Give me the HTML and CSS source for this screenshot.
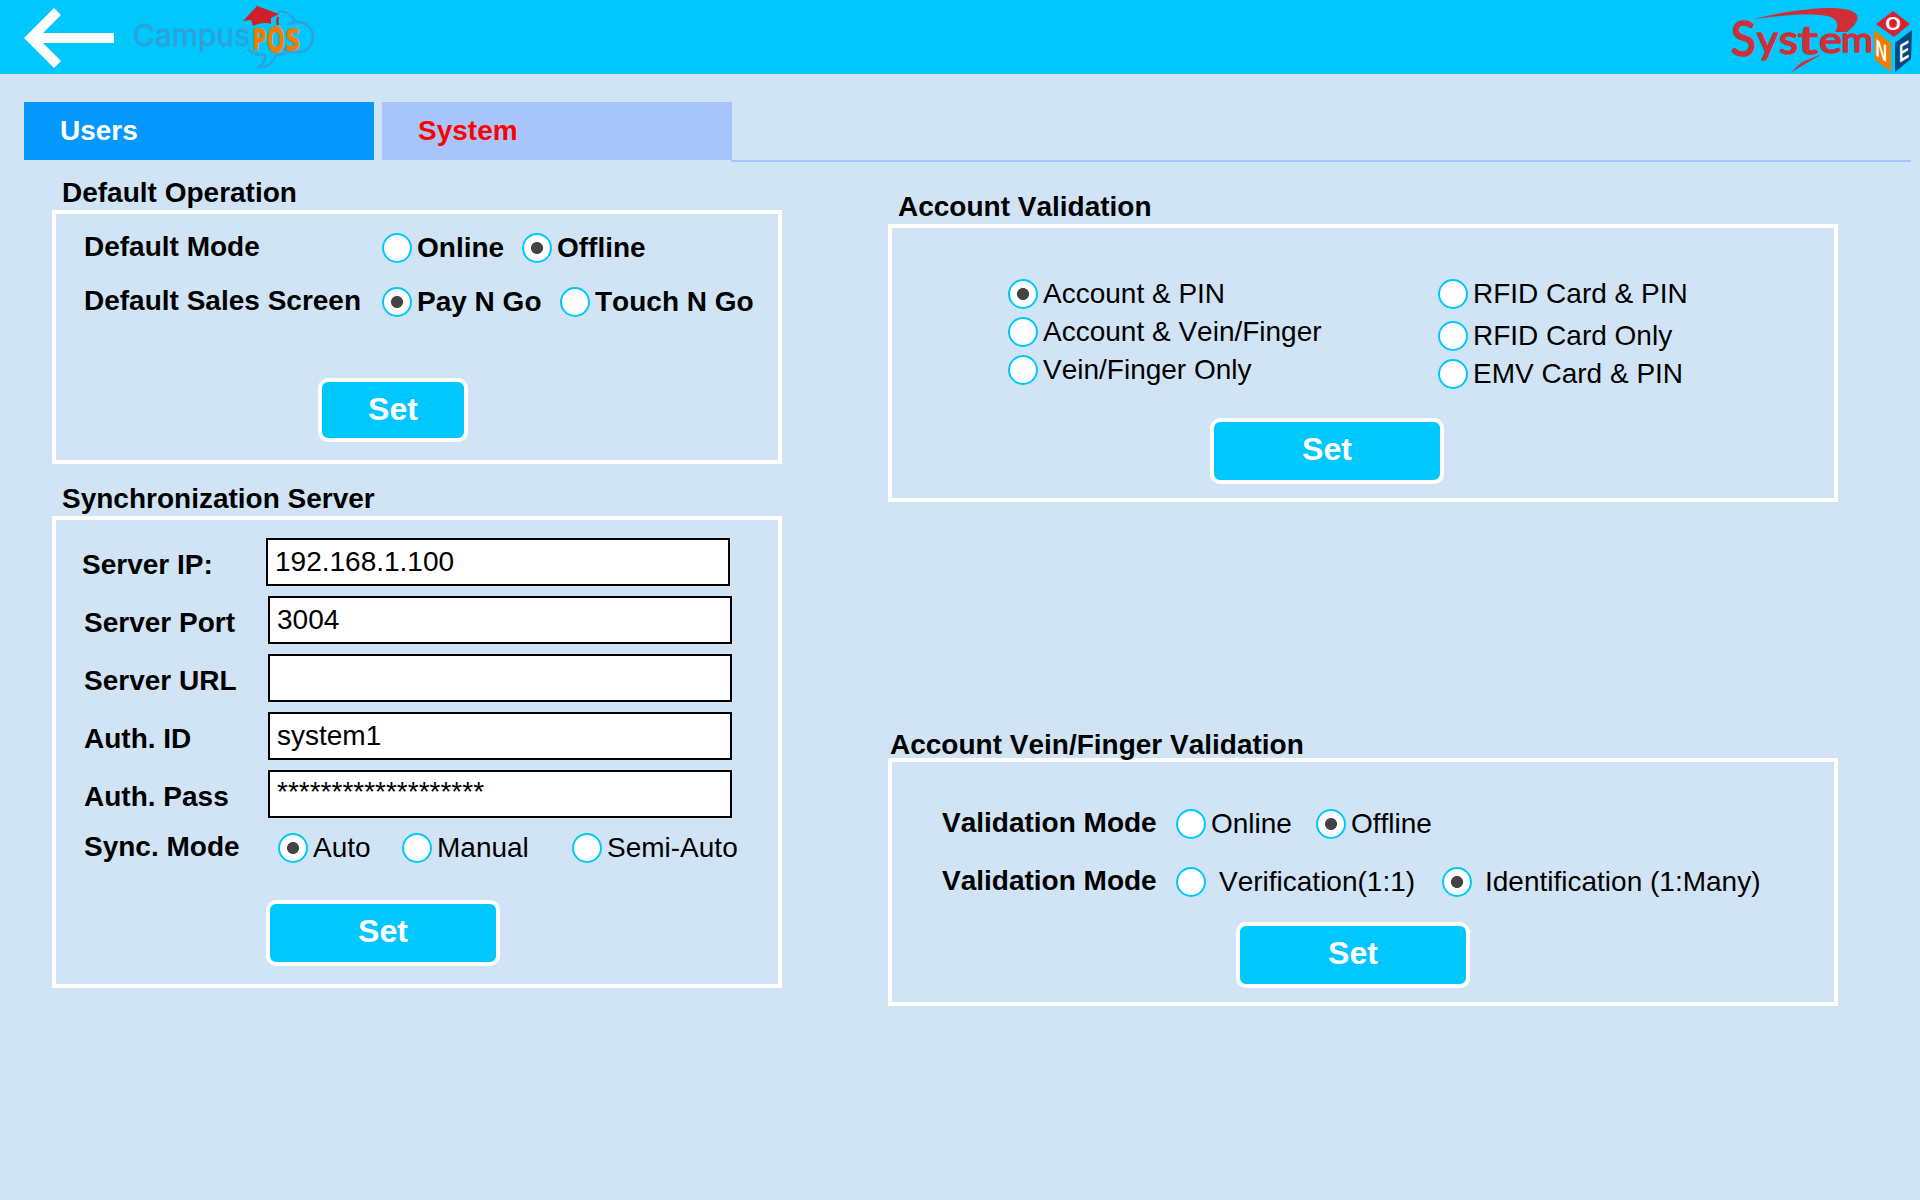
FILE: index.html
```html
<!DOCTYPE html>
<html lang="en">
<head>
<meta charset="utf-8">
<title>CampusPOS Settings</title>
<link rel="stylesheet" href="styles.css">
</head>
<body>
<header class="topbar">
  <svg class="back" width="90" height="74" viewBox="24 0 90 74"><path fill="#fff" d="M24 38 54 8l7 7-18 18h71v10H43l18 18-7 7z"/></svg>
  <svg class="campus" width="184" height="74" viewBox="132 0 184 74">
    <g fill="none" stroke="#2ba3dc" stroke-width="2.6" stroke-linecap="round">
      <path d="M279 12c7-1 13 3 16 10 10-1 18 6 18 15 0 10-8 16-18 15-5 0-8-1-12-3"/>
      <path d="M296 22c-3 0-5 1-7 2M249 50c5 5 10 5 16 5 1 5-2 9-6 12 9 0 15-5 17-12 6 0 9-1 12-4"/>
    </g>
    <text class="campus-word" x="133" y="46" textLength="117" lengthAdjust="spacingAndGlyphs">Campus</text>
    <g class="pos-word">
      <text x="252" y="50" font-size="30" textLength="14.500" lengthAdjust="spacingAndGlyphs">P</text>
      <text x="266.500" y="53" font-size="37" textLength="18.500" lengthAdjust="spacingAndGlyphs">O</text>
      <text x="285" y="51" font-size="32" textLength="15" lengthAdjust="spacingAndGlyphs">S</text>
    </g>
    <path fill="#cf2027" d="m257 6 22 8-8 4v6c-5-2-12-1-18 2l-2-6-8 1z"/>
    <path d="M278 17c-1 3-1 5 0 8" fill="none" stroke="#cf2027" stroke-width="2.4"/>
  </svg>
  <svg class="systemone" width="200" height="74" viewBox="0 0 200 74">
    <path fill="#cf2f36" d="M33 19.500C60 12 90 8 112 8c16 0 27 4 25.500 11-2 6-7 10-10.500 13h-12c4-6 3-11-3-14.500C98 12 60 15 33 19.500zM102 54 70 73l12-11z"/>
    <g class="system-word">
      <text x="11" y="56" font-size="49" textLength="25" lengthAdjust="spacingAndGlyphs">S</text>
      <text x="37" y="53" font-size="39" textLength="21" lengthAdjust="spacingAndGlyphs">y</text>
      <text x="59" y="53.500" font-size="41" textLength="19" lengthAdjust="spacingAndGlyphs">s</text>
      <text x="78" y="53.500" font-size="38" textLength="20" lengthAdjust="spacingAndGlyphs">t</text>
      <text x="99" y="52.500" font-size="37" textLength="23" lengthAdjust="spacingAndGlyphs">e</text>
      <text x="121" y="51.500" font-size="34" textLength="32" lengthAdjust="spacingAndGlyphs">m</text>
    </g>
    <path fill="#d8232e" d="m173 11 17 13-16 13-18-13z"/>
    <path fill="#f07d00" d="m154 30 17 13v29l-16-12z"/>
    <path fill="#07487e" d="m192 30-17 13v29l16-13z"/>
    <g class="cube-word">
      <text transform="translate(165.300 30) scale(1.15 1)" font-size="17.500">O</text>
      <text transform="matrix(.95 .6 0 1.400 155.500 55)" font-size="17">N</text>
      <text transform="matrix(.85 -.5 0 1.400 179 63)" font-size="18">E</text>
    </g>
  </svg>
</header>

<nav class="tabs">
  <a class="tab tab-users">Users</a>
  <a class="tab tab-system">System</a>
  <span class="tab-line"></span>
</nav>

<main class="columns">
  <div class="column column-left">
    <section>
      <h2 class="title">Default Operation</h2>
      <div class="panel panel-operation">
        <div class="row row-operation">
          <span class="name">Default Mode</span>
          <label class="radio strong first-choice"><i class="dot"></i>Online</label>
          <label class="radio strong"><i class="dot on"></i>Offline</label>
        </div>
        <div class="row row-operation">
          <span class="name">Default Sales Screen</span>
          <label class="radio strong pay-choice"><i class="dot on"></i>Pay N Go</label>
          <label class="radio strong"><i class="dot"></i>Touch N Go</label>
        </div>
        <button class="set set-small">Set</button>
      </div>
    </section>
    <section>
      <h2 class="title">Synchronization Server</h2>
      <div class="panel panel-sync">
        <div class="field field-ip"><span class="name">Server IP:</span><input value="192.168.1.100"></div>
        <div class="field"><span class="name">Server Port</span><input value="3004"></div>
        <div class="field"><span class="name">Server URL</span><input value=""></div>
        <div class="field"><span class="name">Auth. ID</span><input value="system1"></div>
        <div class="field"><span class="name">Auth. Pass</span><input class="masked" value="*******************"></div>
        <div class="row row-sync">
          <span class="name">Sync. Mode</span>
          <label class="radio"><i class="dot on"></i>Auto</label>
          <label class="radio"><i class="dot"></i>Manual</label>
          <label class="radio"><i class="dot"></i>Semi-Auto</label>
        </div>
        <button class="set set-sync">Set</button>
      </div>
    </section>
  </div>

  <div class="column column-right">
    <section>
      <h2 class="title">Account Validation</h2>
      <div class="panel panel-account">
        <div class="choices">
          <div class="choice-list">
            <label class="radio"><i class="dot on"></i>Account &amp; PIN</label>
            <label class="radio"><i class="dot"></i>Account &amp; Vein/Finger</label>
            <label class="radio"><i class="dot"></i>Vein/Finger Only</label>
          </div>
          <div class="choice-list card-list">
            <label class="radio"><i class="dot"></i>RFID Card &amp; PIN</label>
            <label class="radio"><i class="dot"></i>RFID Card Only</label>
            <label class="radio"><i class="dot"></i>EMV Card &amp; PIN</label>
          </div>
        </div>
        <button class="set set-account">Set</button>
      </div>
    </section>
    <section>
      <h2 class="title title-vein">Account Vein/Finger Validation</h2>
      <div class="panel panel-vein">
        <div class="row row-vein">
          <span class="name">Validation Mode</span>
          <label class="radio first-choice"><i class="dot"></i>Online</label>
          <label class="radio"><i class="dot on"></i>Offline</label>
        </div>
        <div class="row row-vein">
          <span class="name">Validation Mode</span>
          <label class="radio spaced verify-choice"><i class="dot"></i>Verification(1:1)</label>
          <label class="radio spaced"><i class="dot on"></i>Identification (1:Many)</label>
        </div>
        <button class="set set-vein">Set</button>
      </div>
    </section>
  </div>
</main>
</body>
</html>
```
FILE: styles.css
```css
* { box-sizing: border-box; }

body {
  margin: 0;
  height: 1200px;
  overflow: hidden;
  background: #d1e4f5;
  color: #000;
  font: 28px/30px "Liberation Sans", Arial, sans-serif;
  font-kerning: none;
}

.topbar {
  display: flex;
  height: 74px;
  padding-left: 24px;
  background: #00c8ff;
}
.campus { margin-left: 18px; }
.systemone { margin-left: auto; }
.campus-word { font-family: Inter, sans-serif; font-size: 30px; fill: #2ba3dc; stroke: #2ba3dc; stroke-width: .8; }
.pos-word { font-family: "Open Sans", sans-serif; font-weight: 800; fill: #f07d00; }
.system-word { font-family: Lato, sans-serif; fill: #cf2f36; stroke: #cf2f36; stroke-width: 1.6; stroke-linejoin: round; }
.cube-word { font-family: "Liberation Sans", sans-serif; font-weight: 700; fill: #fff; }

.tabs {
  display: flex;
  height: 60px;
  margin: 28px 9px 0 24px;
}
.tab {
  width: 350px;
  height: 58px;
  padding: 14px 0 0 36px;
  font-weight: 700;
}
.tab-users { margin-right: 8px; background: #0498ff; color: #fff; }
.tab-system { background: #a8c5fb; color: #f00; }
.tab-line { flex: 1; align-self: flex-end; height: 2px; margin-left: -1px; background: #a8c5fb; }

.columns { display: flex; padding-left: 52px; }
.column-left { width: 730px; margin-right: 106px; padding-top: 15px; }
.column-right { width: 950px; padding-top: 29px; }

.title {
  height: 33px;
  margin: 0;
  padding-left: 10px;
  font-size: 28px;
  font-weight: 700;
  line-height: 32px;
}
.title-vein { padding-left: 2px; height: 29px; }
.panel { border: 4px solid #fff; }
.panel-operation { height: 254px; margin-bottom: 19px; padding: 19px 0 0 28px; }
.panel-sync { height: 472px; padding: 18px 0 0 28px; }
.panel-account { height: 278px; margin-bottom: 227px; padding: 51px 0 0 116px; }
.panel-vein { height: 248px; padding: 47px 0 0 50px; }

.row { display: flex; height: 30px; }
.name { font-weight: 700; white-space: nowrap; position: relative; top: -1px; }
.row-operation { margin-bottom: 24px; }
.row-operation .name { width: 298px; }
.row-operation .first-choice, .row-vein .first-choice { width: 140px; }
.row-operation .pay-choice { width: 178px; }
.row-vein { margin-bottom: 28px; }
.row-vein .name { width: 234px; }
.row-vein .verify-choice { width: 266px; }
.row-sync { display: grid; grid-template-columns: 194px 124px 170px auto; margin-top: 15px; }

.radio { display: flex; gap: 5px; height: 30px; white-space: nowrap; }
.radio.strong { font-weight: 700; }
.radio.spaced { gap: 13px; }
.dot {
  flex: none;
  width: 30px;
  height: 30px;
  border: 2px solid #00c8ff;
  border-radius: 50%;
  background: #fff;
}
.dot.on { background: radial-gradient(circle, #444 5.600px, #fff 6.400px); }

.field { display: flex; height: 48px; margin-bottom: 10px; }
.field .name { width: 184px; padding-top: 13px; }
.field-ip { margin-left: -2px; }
.field input {
  width: 464px;
  height: 48px;
  padding: 0 7px;
  border: 2px solid #000;
  border-radius: 0;
  background: #fff;
  color: #000;
  font: inherit;
  font-kerning: none;
}
.field .masked { padding-bottom: 4px; }

.choices { display: grid; grid-template-columns: 430px auto; }
.choice-list { display: flex; flex-direction: column; gap: 8px; }
.card-list .radio:first-child { margin-bottom: 4px; }

.set {
  display: block;
  width: 234px;
  height: 66px;
  padding: 0 0 4px;
  border: 4px solid #fff;
  border-radius: 10px;
  background: #00c8ff;
  color: #fff;
  font: 700 32px/36px "Liberation Sans", Arial, sans-serif;
}
.set-small { width: 150px; height: 64px; margin: 61px 0 0 234px; padding-bottom: 2px; }
.set-sync { margin: 37px 0 0 182px; }
.set-account { margin: 29px 0 0 202px; }
.set-vein { margin: -3px 0 0 294px; }
```
